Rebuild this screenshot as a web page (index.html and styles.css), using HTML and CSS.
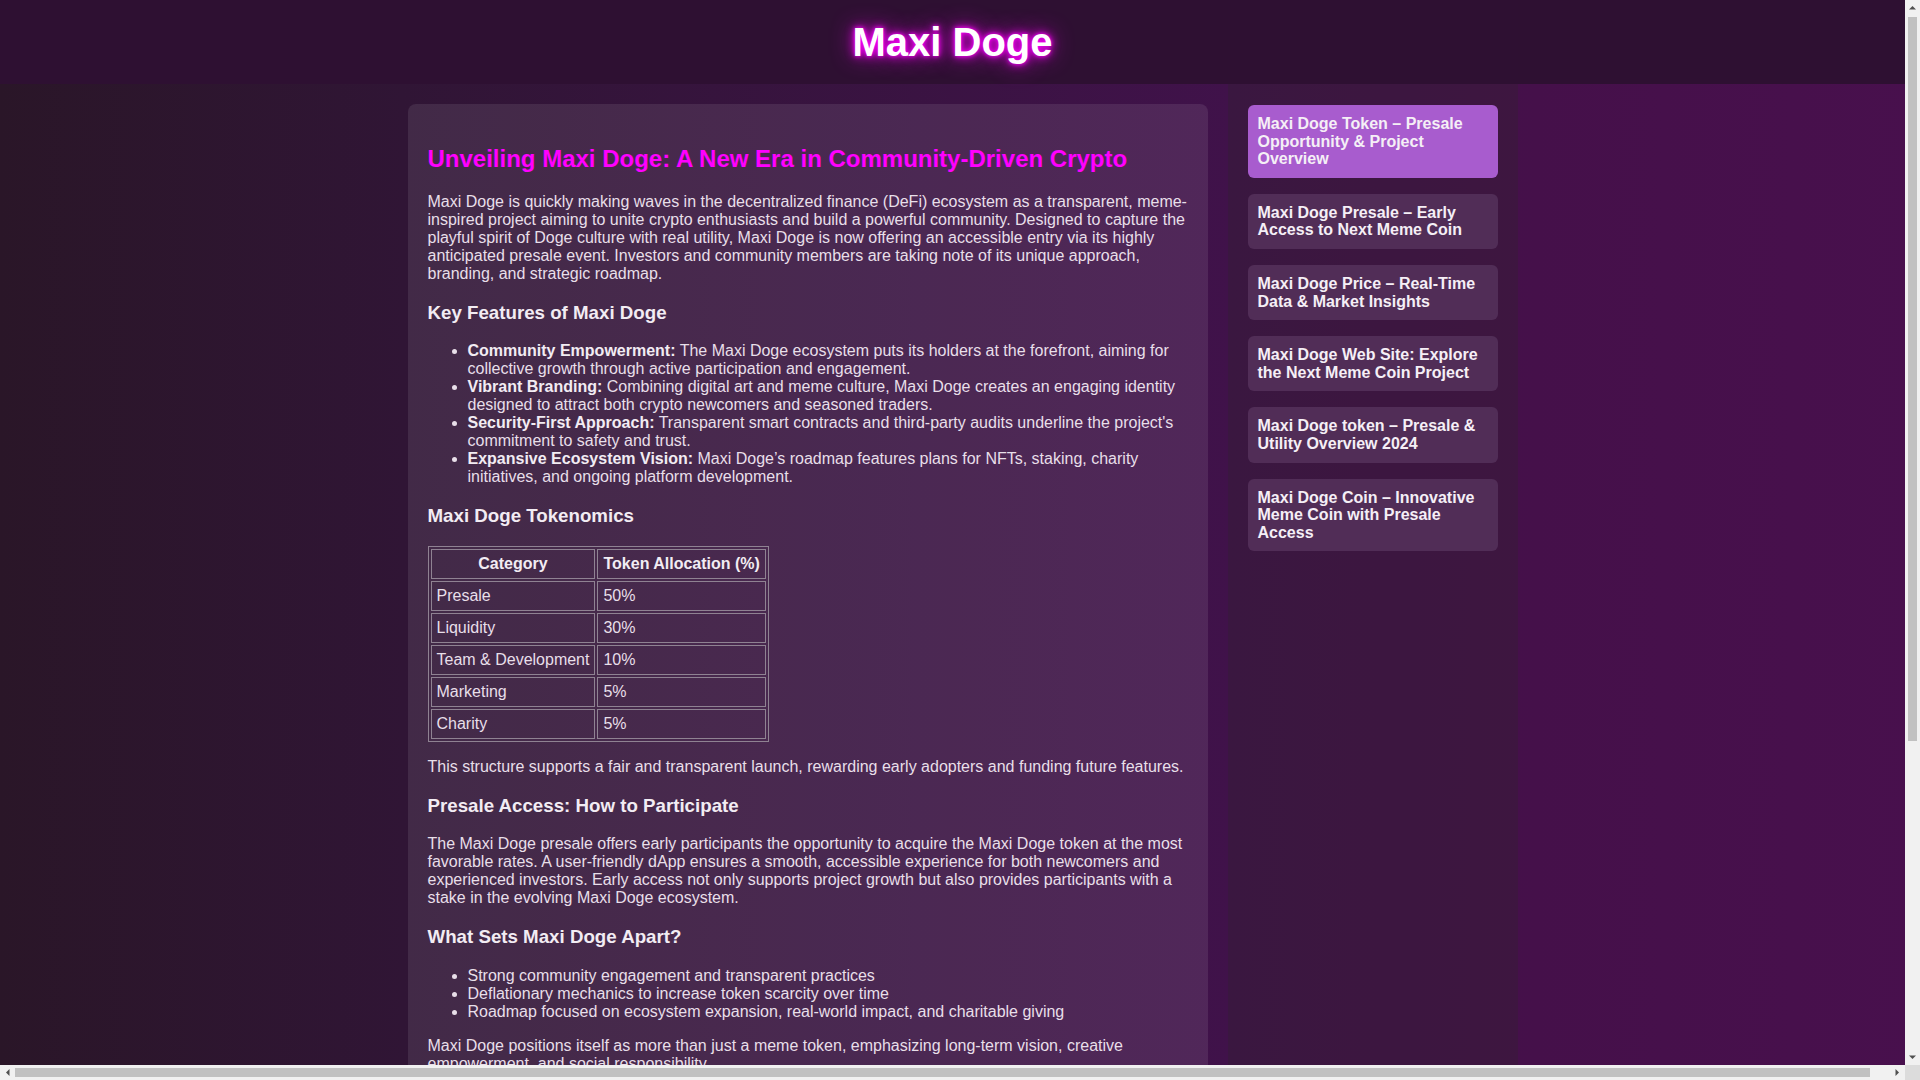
FILE: index.html
```html
<!DOCTYPE html>
<html lang="en">
<head>
<meta charset="utf-8">
<title>Maxi Doge</title>
<link rel="stylesheet" href="styles.css">
</head>
<body>
<header class="site-header">
  <h1 class="site-title">Maxi Doge</h1>
</header>
<div class="layout">
  <main class="article">
    <h2 class="article-title">Unveiling Maxi Doge: A New Era in Community-Driven Crypto</h2>
    <p>Maxi Doge is quickly making waves in the decentralized finance (DeFi) ecosystem as a transparent, meme-inspired project aiming to unite crypto enthusiasts and build a powerful community. Designed to capture the playful spirit of Doge culture with real utility, Maxi Doge is now offering an accessible entry via its highly anticipated presale event. Investors and community members are taking note of its unique approach, branding, and strategic roadmap.</p>
    <h3>Key Features of Maxi Doge</h3>
    <ul>
      <li><strong>Community Empowerment:</strong> The Maxi Doge ecosystem puts its holders at the forefront, aiming for collective growth through active participation and engagement.</li>
      <li><strong>Vibrant Branding:</strong> Combining digital art and meme culture, Maxi Doge creates an engaging identity designed to attract both crypto newcomers and seasoned traders.</li>
      <li><strong>Security-First Approach:</strong> Transparent smart contracts and third-party audits underline the project's commitment to safety and trust.</li>
      <li><strong>Expansive Ecosystem Vision:</strong> Maxi Doge’s roadmap features plans for NFTs, staking, charity initiatives, and ongoing platform development.</li>
    </ul>
    <h3>Maxi Doge Tokenomics</h3>
    <table class="tokenomics">
      <thead>
        <tr><th>Category</th><th>Token Allocation (%)</th></tr>
      </thead>
      <tbody>
        <tr><td>Presale</td><td>50%</td></tr>
        <tr><td>Liquidity</td><td>30%</td></tr>
        <tr><td>Team &amp; Development</td><td>10%</td></tr>
        <tr><td>Marketing</td><td>5%</td></tr>
        <tr><td>Charity</td><td>5%</td></tr>
      </tbody>
    </table>
    <p>This structure supports a fair and transparent launch, rewarding early adopters and funding future features.</p>
    <h3>Presale Access: How to Participate</h3>
    <p>The Maxi Doge presale offers early participants the opportunity to acquire the Maxi Doge token at the most favorable rates. A user-friendly dApp ensures a smooth, accessible experience for both newcomers and experienced investors. Early access not only supports project growth but also provides participants with a stake in the evolving Maxi Doge ecosystem.</p>
    <h3>What Sets Maxi Doge Apart?</h3>
    <ul>
      <li>Strong community engagement and transparent practices</li>
      <li>Deflationary mechanics to increase token scarcity over time</li>
      <li>Roadmap focused on ecosystem expansion, real-world impact, and charitable giving</li>
    </ul>
    <p>Maxi Doge positions itself as more than just a meme token, emphasizing long-term vision, creative empowerment, and social responsibility.</p>
  </main>
  <aside class="sidebar">
    <a class="side-link active" href="#">Maxi Doge Token – Presale Opportunity &amp; Project Overview</a>
    <a class="side-link" href="#">Maxi Doge Presale – Early Access to Next Meme Coin</a>
    <a class="side-link" href="#">Maxi Doge Price – Real-Time Data &amp; Market Insights</a>
    <a class="side-link" href="#">Maxi Doge Web Site: Explore the Next Meme Coin Project</a>
    <a class="side-link" href="#">Maxi Doge token – Presale &amp; Utility Overview 2024</a>
    <a class="side-link" href="#">Maxi Doge Coin – Innovative Meme Coin with Presale Access</a>
  </aside>
</div>
<div class="vscroll" aria-hidden="true">
  <svg class="arrow up" width="15" height="15" viewBox="0 0 15 15"><path d="M4 9.5 L7.5 6 L11 9.5 Z" fill="#505050"/></svg>
  <div class="vthumb"></div>
  <svg class="arrow down" width="15" height="15" viewBox="0 0 15 15"><path d="M4 5.5 L7.5 9 L11 5.5 Z" fill="#505050"/></svg>
</div>
<div class="hscroll" aria-hidden="true">
  <svg class="arrow left" width="15" height="15" viewBox="0 0 15 15"><path d="M9.5 4 L6 7.5 L9.5 11 Z" fill="#505050"/></svg>
  <div class="hthumb"></div>
  <svg class="arrow right" width="15" height="15" viewBox="0 0 15 15"><path d="M5.5 4 L9 7.5 L5.5 11 Z" fill="#505050"/></svg>
</div>
<div class="scroll-corner" aria-hidden="true"></div>
</body>
</html>
```

FILE: styles.css
```css
html {
  overflow: hidden;
  background: linear-gradient(to right, #2a1628 0%, #301535 21%, #40124a 64%, #45104a 80%, #48104d 100%);
}

body {
  margin: 0;
  width: 1905px;
  font-family: "Liberation Sans", Arial, sans-serif;
  font-size: 16px;
  line-height: 18px;
  color: #e8dfe9;
}

.site-header {
  height: 84px;
  background: #2e1032;
  display: flex;
  align-items: center;
  justify-content: center;
}

.site-title {
  margin: 0;
  font-size: 40px;
  line-height: 46px;
  font-weight: bold;
  color: #ffffff;
  text-shadow: 0 0 4px #ff00ff, 0 0 10px #ff00ff, 0 0 22px #d000d0;
}

.layout {
  width: 100%;
  padding: 0 10px 20px;
  display: flex;
  justify-content: center;
  align-items: stretch;
  gap: 20px;
}

.article {
  box-sizing: border-box;
  width: 800px;
  min-height: 1406px;
  margin-top: 20px;
  padding: 21px 20px 20px;
  background: rgba(255, 255, 255, 0.09);
  border-radius: 8px;
}

.article-title {
  font-size: 24px;
  line-height: 27.6px;
  margin: 19.92px 0 20.5px;
  color: #ff00ff;
}

.article h3 {
  font-size: 18.72px;
  line-height: 22px;
  margin: 18.72px 0;
  color: #f2ecf3;
}

.article p {
  margin: 16px 0;
}

.article ul {
  margin: 16px 0;
  padding-left: 40px;
}

.article strong {
  color: #f2ecf3;
}

.tokenomics {
  border: 1px solid #8f8292;
  border-spacing: 2px;
}

.tokenomics th,
.tokenomics td {
  border: 1px solid #8f8292;
  padding: 5px;
  text-align: left;
}

.tokenomics th {
  text-align: center;
  color: #f2ecf3;
}

.sidebar {
  box-sizing: border-box;
  width: 290px;
  flex: none;
  padding: 21px 20px 20px;
  background: rgba(45, 38, 42, 0.3);
  display: flex;
  flex-direction: column;
  gap: 16px;
}

.side-link {
  display: block;
  padding: 10px;
  border-radius: 6px;
  background: #512d57;
  color: #f5eff6;
  font-weight: bold;
  line-height: 1.1;
  text-decoration: none;
}

.side-link.active {
  background: #a85cce;
}

/* emulated browser scrollbars */
.vscroll {
  position: fixed;
  top: 0;
  right: 0;
  width: 15px;
  height: 1065px;
  background: #f1f1f1;
  display: flex;
  flex-direction: column;
}

.vthumb {
  width: 9px;
  height: 724px;
  margin: 2px 3px 0;
  background: #c1c1c1;
}

.vscroll .down {
  margin-top: auto;
}

.hscroll {
  position: fixed;
  left: 0;
  bottom: 0;
  width: 1905px;
  height: 15px;
  background: #f1f1f1;
  display: flex;
  align-items: center;
}

.hthumb {
  flex: 1;
  height: 9px;
  margin: 0 20px 0 0;
  background: #c1c1c1;
}

.arrow {
  display: block;
  flex: none;
}

.scroll-corner {
  position: fixed;
  right: 0;
  bottom: 0;
  width: 15px;
  height: 15px;
  background: #dcdcdc;
}
```
